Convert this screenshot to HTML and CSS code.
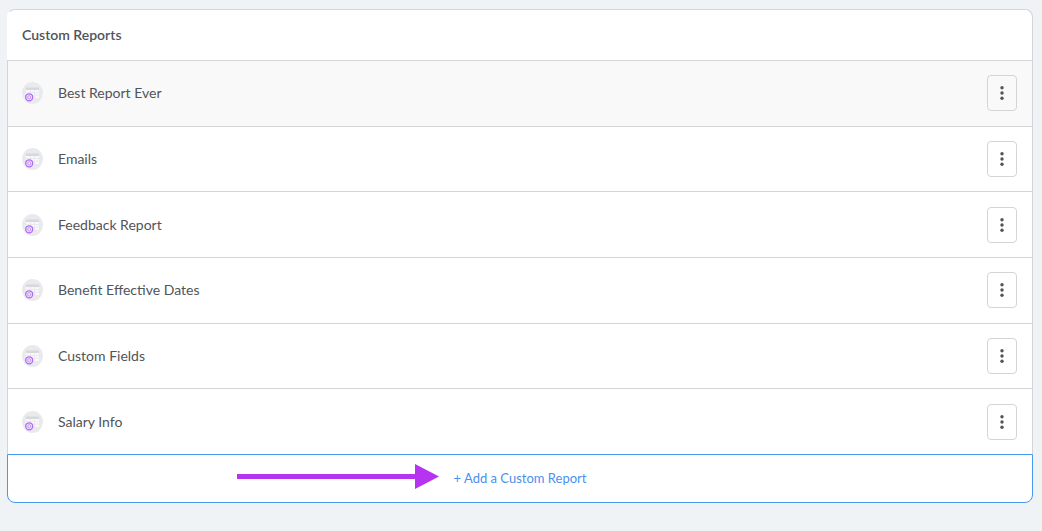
FILE: index.html
```
<!DOCTYPE html>
<html lang="en">
<head>
    <meta charset="UTF-8">
    <meta name="viewport" content="width=device-width, initial-scale=1.0">
    <title>Custom Reports</title>
    <link rel="stylesheet" href="styles.css">
</head>
<body>
    <!-- shared icons -->
    <svg class="sprite" aria-hidden="true">
        <symbol id="icon-report" viewBox="0 0 21 22">
            <ellipse cx="10.5" cy="11" rx="10.5" ry="11" fill="#e9eaee"/>
            <path d="M4 8h13v8H4z" fill="#f8f8fa"/>
            <path d="M4 5.5h13V8H4z" fill="#d7d8dc"/>
            <path d="M4 10.5h13M4 13h13M8.5 8v8M12.5 8v8" stroke="#e6e7eb" stroke-width=".8"/>
            <circle cx="7.2" cy="15.3" r="3.5" fill="#f3eafe" stroke="#ae6cf5" stroke-width="1.3"/>
            <path d="M5.8 14.4l1.4-.8 1.5.8v1.9l-1.5.9-1.4-.9z" fill="none" stroke="#ae6cf5" stroke-width=".7"/>
        </symbol>
        <symbol id="icon-dots" viewBox="0 0 4 16">
            <circle cx="2" cy="2.7" r="1.7"/>
            <circle cx="2" cy="8" r="1.7"/>
            <circle cx="2" cy="13.3" r="1.7"/>
        </symbol>
    </svg>

    <main class="card">
        <h1 class="card-title">Custom Reports</h1>

        <ul class="report-list">
            <li class="report active">
                <svg class="report-icon" aria-hidden="true"><use href="#icon-report"/></svg>
                <span class="report-name">Best Report Ever</span>
                <button class="menu-btn" type="button" aria-label="Options"><svg class="dots"><use href="#icon-dots"/></svg></button>
            </li>
            <li class="report">
                <svg class="report-icon" aria-hidden="true"><use href="#icon-report"/></svg>
                <span class="report-name">Emails</span>
                <button class="menu-btn" type="button" aria-label="Options"><svg class="dots"><use href="#icon-dots"/></svg></button>
            </li>
            <li class="report">
                <svg class="report-icon" aria-hidden="true"><use href="#icon-report"/></svg>
                <span class="report-name">Feedback Report</span>
                <button class="menu-btn" type="button" aria-label="Options"><svg class="dots"><use href="#icon-dots"/></svg></button>
            </li>
            <li class="report">
                <svg class="report-icon" aria-hidden="true"><use href="#icon-report"/></svg>
                <span class="report-name">Benefit Effective Dates</span>
                <button class="menu-btn" type="button" aria-label="Options"><svg class="dots"><use href="#icon-dots"/></svg></button>
            </li>
            <li class="report">
                <svg class="report-icon" aria-hidden="true"><use href="#icon-report"/></svg>
                <span class="report-name">Custom Fields</span>
                <button class="menu-btn" type="button" aria-label="Options"><svg class="dots"><use href="#icon-dots"/></svg></button>
            </li>
            <li class="report">
                <svg class="report-icon" aria-hidden="true"><use href="#icon-report"/></svg>
                <span class="report-name">Salary Info</span>
                <button class="menu-btn" type="button" aria-label="Options"><svg class="dots"><use href="#icon-dots"/></svg></button>
            </li>
        </ul>

        <div class="card-footer">
            <button class="add-btn" type="button">+ Add a Custom Report</button>
            <!-- arrow pointing at the add button -->
            <svg class="arrow" viewBox="0 0 202 26" aria-hidden="true">
                <path d="M0 10h178V0l24 12.5L178 25V15H0z" fill="#b633f0"/>
            </svg>
        </div>
    </main>
</body>
</html>
```
FILE: styles.css
```
* {
    box-sizing: border-box;
}
body {
    margin: 0;
    padding: 9px 9px 28px 7px;
    background: #eff3f6;
    color: #515459;
    font-family: Lato, "Liberation Sans", sans-serif;
    font-size: 14px;
    line-height: 20px;
}
.sprite {
    display: none;
}

.card-title {
    margin: 0;
    padding: 15px 14px;
    background: #fff;
    border: 1px solid #d3d5d8;
    border-left-color: #fff;
    border-bottom: 0;
    border-radius: 8px 8px 0 0;
    font-size: 14px;
    font-weight: 600;
    line-height: 20px;
}

/* report rows */
.report-list {
    display: grid;
    grid-auto-rows: 1fr;
    min-height: 394px;
    margin: 0;
    padding: 0;
    list-style: none;
}
.report {
    display: flex;
    align-items: center;
    padding: 0 15px 0 14px;
    background: #fff;
    border: 1px solid #d3d5d8;
    border-bottom: 0;
}
.report.active {
    background: #f9f9f9;
}
.report-icon {
    width: 21px;
    height: 22px;
    margin-right: 15px;
}
.report-name {
    flex: 1;
}
.menu-btn {
    display: flex;
    align-items: center;
    justify-content: center;
    width: 30px;
    height: 36px;
    padding: 0;
    background: none;
    border: 1px solid #d3d5d8;
    border-radius: 4px;
    cursor: pointer;
}
.dots {
    width: 4px;
    height: 16px;
    fill: #515459;
}

/* footer */
.card-footer {
    position: relative;
}
.add-btn {
    display: block;
    width: 100%;
    padding: 14px;
    background: #fff;
    border: 1px solid #4a97ee;
    border-radius: 0 0 8px 8px;
    color: #4a90f0;
    font: inherit;
    font-size: 13px;
    line-height: 19px;
    cursor: pointer;
}
.arrow {
    position: absolute;
    top: 10px;
    right: calc(50% + 81px);
    width: 202px;
    height: 26px;
}
```
